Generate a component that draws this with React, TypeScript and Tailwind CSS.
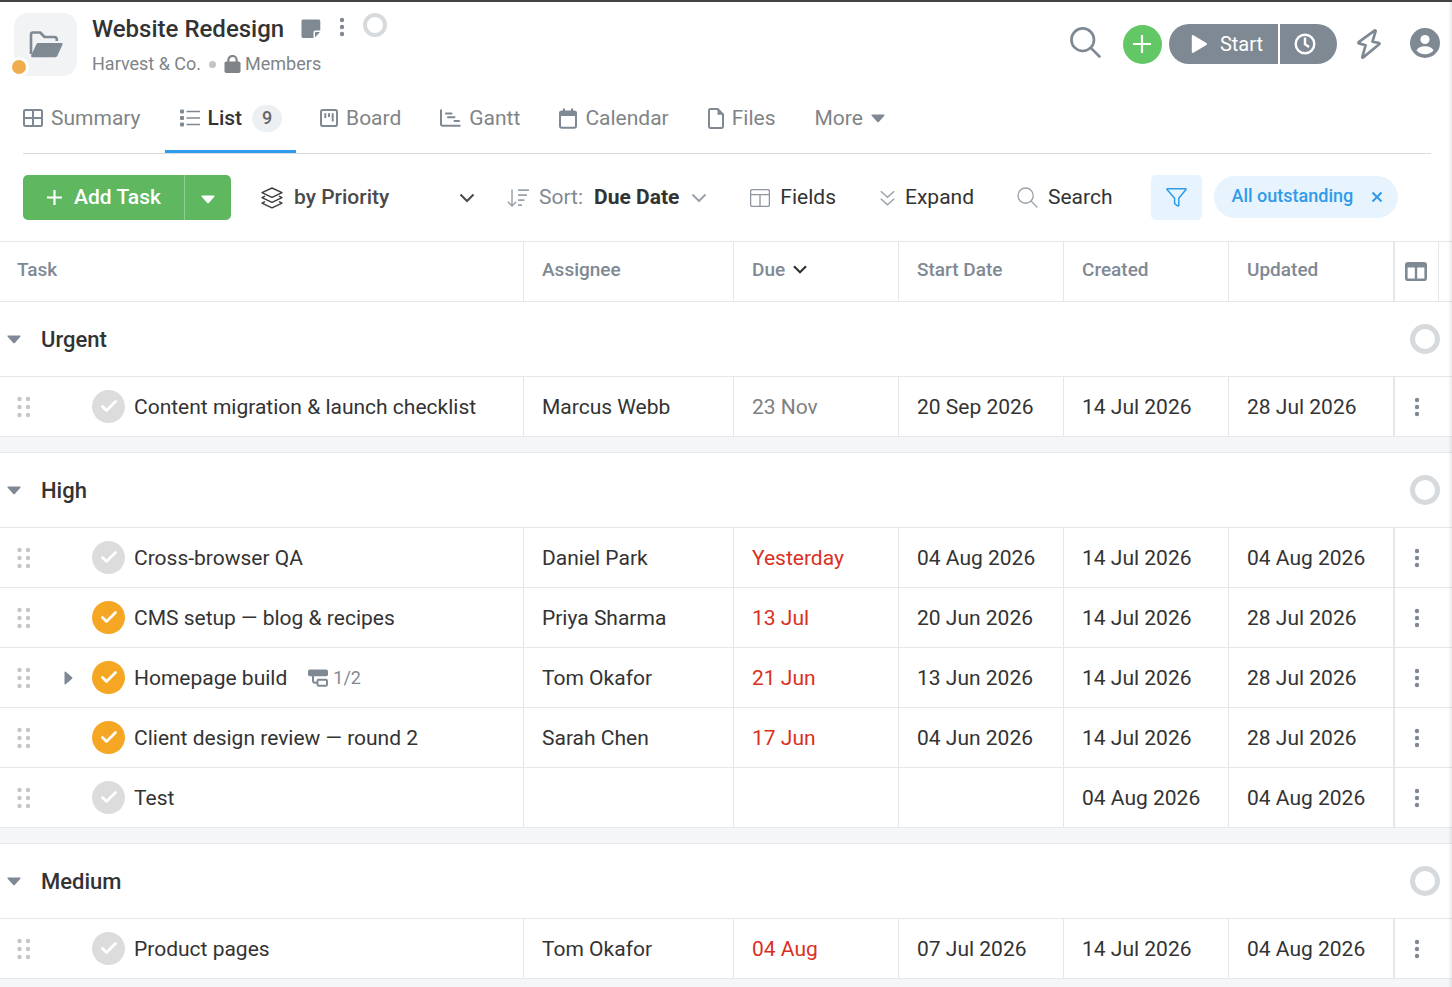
import { Fragment, type ReactNode } from "react";

type Task = {
  name: string;
  assignee?: string;
  due?: string;
  overdue?: boolean;
  start?: string;
  created: string;
  updated: string;
  started?: boolean;
  subtasks?: string;
};

type Group = { title: string; tasks: Task[] };

const groups: Group[] = [
  {
    title: "Urgent",
    tasks: [
      { name: "Content migration & launch checklist", assignee: "Marcus Webb", due: "23 Nov", start: "20 Sep 2026", created: "14 Jul 2026", updated: "28 Jul 2026" },
    ],
  },
  {
    title: "High",
    tasks: [
      { name: "Cross-browser QA", assignee: "Daniel Park", due: "Yesterday", overdue: true, start: "04 Aug 2026", created: "14 Jul 2026", updated: "04 Aug 2026" },
      { name: "CMS setup — blog & recipes", assignee: "Priya Sharma", due: "13 Jul", overdue: true, start: "20 Jun 2026", created: "14 Jul 2026", updated: "28 Jul 2026", started: true },
      { name: "Homepage build", assignee: "Tom Okafor", due: "21 Jun", overdue: true, start: "13 Jun 2026", created: "14 Jul 2026", updated: "28 Jul 2026", started: true, subtasks: "1/2" },
      { name: "Client design review — round 2", assignee: "Sarah Chen", due: "17 Jun", overdue: true, start: "04 Jun 2026", created: "14 Jul 2026", updated: "28 Jul 2026", started: true },
      { name: "Test", created: "04 Aug 2026", updated: "04 Aug 2026" },
    ],
  },
  {
    title: "Medium",
    tasks: [
      { name: "Product pages", assignee: "Tom Okafor", due: "04 Aug", overdue: true, start: "07 Jul 2026", created: "14 Jul 2026", updated: "04 Aug 2026" },
    ],
  },
];

/* Icons */

const CaretDown = ({ className = "text-[#7f8994]" }: { className?: string }) => (
  <svg width="14" height="9" viewBox="0 0 14 9" className={className} aria-hidden="true">
    <path d="M1.2.5h11.6c.8 0 1 .7.5 1.200L7.800 7.900c-.4.5-1.100.5-1.500 0L.700 1.700C.2 1.200.4.5 1.200.5z" fill="currentColor" />
  </svg>
);

const VerticalDots = () => (
  <svg width="6" height="20" viewBox="0 0 6 20" fill="#7f8994" aria-hidden="true">
    <circle cx="3" cy="3" r="2.200" />
    <circle cx="3" cy="10" r="2.200" />
    <circle cx="3" cy="17" r="2.200" />
  </svg>
);

const DragHandle = () => (
  <svg width="14" height="22" viewBox="0 0 14 22" fill="#c4c6c8" aria-hidden="true">
    {[3, 11, 19].map((y) => (
      <Fragment key={y}>
        <circle cx="2.500" cy={y} r="2.200" />
        <circle cx="11" cy={y} r="2.200" />
      </Fragment>
    ))}
  </svg>
);

const SubtaskIcon = () => (
  <svg width="20" height="18" viewBox="0 0 20 18" fill="none" aria-hidden="true">
    <rect x="0" y="0.500" width="20" height="6.800" rx="1.800" fill="#7f8994" />
    <path d="M5 6v5.500c0 1.400.8 2.200 2.200 2.200H9" stroke="#7f8994" strokeWidth="2" />
    <rect x="9.500" y="10.700" width="9.500" height="6" rx="1.300" stroke="#7f8994" strokeWidth="2" />
  </svg>
);

const SummaryIcon = () => (
  <svg width="20" height="18" viewBox="0 0 20 18" fill="none" stroke="#7f8994" strokeWidth="2" aria-hidden="true">
    <rect x="1" y="1" width="18" height="16" rx="1.200" />
    <path d="M10 1v16M1 9h18" />
  </svg>
);

const ListIcon = () => (
  <svg width="20" height="18" viewBox="0 0 20 18" aria-hidden="true">
    <g fill="#7f8994">
      <rect x="0" y="0.500" width="4" height="4" rx="1" />
      <rect x="0" y="7" width="4" height="4" rx="1" />
      <rect x="0" y="13.500" width="4" height="4" rx="1" />
    </g>
    <path d="M6.500 2.500H20M6.500 9H20M6.500 15.500H20" stroke="#7f8994" strokeWidth="1.700" />
  </svg>
);

const BoardIcon = () => (
  <svg width="18" height="18" viewBox="0 0 18 18" fill="none" stroke="#7f8994" aria-hidden="true">
    <rect x="1" y="1" width="16" height="16" rx="1.800" strokeWidth="2" />
    <path d="M5.300 4.300v4.700M9 4.300v3.700M12.700 4.300v8.200" strokeWidth="2" />
  </svg>
);

const GanttIcon = () => (
  <svg width="21" height="18" viewBox="0 0 21 18" fill="none" stroke="#7f8994" strokeWidth="2" aria-hidden="true">
    <path d="M1 .5V15c0 1 .6 1.700 1.700 1.700H20.500" />
    <path d="M6 4.500h5.500M8 8.200h6.500M14.500 11.900h4.500" strokeLinecap="round" />
  </svg>
);

const CalendarIcon = () => (
  <svg width="18" height="21" viewBox="0 0 18 21" fill="none" aria-hidden="true">
    <rect x="1" y="3.400" width="16" height="16.400" rx="1.800" stroke="#7f8994" strokeWidth="2" />
    <path d="M1 3.500h16v4.500H1z" fill="#7f8994" />
    <path d="M5 .5v4M13 .5v4" stroke="#7f8994" strokeWidth="2.200" />
  </svg>
);

const FileIcon = () => (
  <svg width="16" height="21" viewBox="0 0 16 21" fill="none" aria-hidden="true">
    <path d="M2.500 1h7.200L15 6.300v12c0 .9-.6 1.600-1.500 1.600h-11c-.9 0-1.500-.7-1.500-1.600V2.600C1 1.700 1.600 1 2.500 1z" stroke="#7f8994" strokeWidth="2" />
    <path d="M9.500.5v6.200h6z" fill="#7f8994" />
  </svg>
);

const LayersIcon = () => (
  <svg width="22" height="22" viewBox="0 0 22 22" fill="none" stroke="#3c3c3c" strokeWidth="1.400" strokeLinejoin="round" aria-hidden="true">
    <path d="M11 1l10 4.600-10 4.700L1 5.600z" />
    <path d="M4 9.200L1 10.700l10 4.700 10-4.700-3-1.500" />
    <path d="M4 14.600l-3 1.500 10 4.800 10-4.800-3-1.500" />
  </svg>
);

const Chevron = ({ className }: { className: string }) => (
  <svg width="16" height="10" viewBox="0 0 16 10" fill="none" stroke="currentColor" className={className} aria-hidden="true">
    <path d="M1.500 1.500L8 8l6.500-6.500" />
  </svg>
);

const SortIcon = () => (
  <svg width="22" height="18" viewBox="0 0 22 18" fill="none" stroke="#9ba2ab" strokeWidth="1.500" aria-hidden="true">
    <path d="M5 .5v16.500M.8 12.800L5 17l4.200-4.200" />
    <path d="M11 1.200h11M11 6.200h9M11 11.200h6.500M11 16.200h4" strokeWidth="1.700" />
  </svg>
);

const FieldsIcon = () => (
  <svg width="20" height="18" viewBox="0 0 20 18" fill="none" stroke="#8e959f" strokeWidth="1.300" aria-hidden="true">
    <rect x="0.600" y="0.600" width="18.800" height="16.800" rx="1.600" />
    <path d="M.6 5.600h18.800M10 5.600v11.800" />
  </svg>
);

const ExpandIcon = () => (
  <svg width="15" height="16" viewBox="0 0 15 16" fill="none" stroke="#9ba2ab" strokeWidth="1.500" aria-hidden="true">
    <path d="M.8 1.200l6.700 6 6.700-6M.8 8.700l6.700 6 6.700-6" />
  </svg>
);

const SearchIcon = ({ size, stroke, color }: { size: number; stroke: number; color: string }) => (
  <svg width={size} height={size} viewBox="0 0 30 30" fill="none" stroke={color} strokeWidth={stroke} strokeLinecap="round" aria-hidden="true">
    <circle cx="12.300" cy="12.300" r="10.900" />
    <path d="M20.400 20.400L28.500 28.500" />
  </svg>
);

const ColumnsIcon = () => (
  <svg width="22" height="19" viewBox="0 0 22 19" fill="none" aria-hidden="true">
    <rect x="1.300" y="1.300" width="19.400" height="16.400" rx="1.800" stroke="#7f8994" strokeWidth="2.600" />
    <path d="M1 1.500h20v4H1z" fill="#7f8994" />
    <path d="M11 5v13" stroke="#7f8994" strokeWidth="2.400" />
  </svg>
);

const Ring = ({ size, label }: { size: number; label: string }) => (
  <svg width={size} height={size} viewBox="0 0 30 30" fill="none" role="img" aria-label={label}>
    <circle cx="15" cy="15" r="12.500" stroke="#d6dadd" strokeWidth="5" />
  </svg>
);

/* Page parts */

const Header = () => (
  <header className="flex h-[84px] items-start justify-between pr-3 pl-[14px]">
    <div className="flex">
      <div className="relative mt-[11px] flex size-[63px] items-center justify-center rounded-[14px] bg-[#f1f3f5]">
        <svg width="34" height="27" viewBox="0 0 34 27" fill="none" aria-hidden="true">
          <path d="M2 23V3.500C2 2.300 2.700 1.500 3.900 1.500h7.300l4.300 4.500h9.600c1.700 0 2.700 1 2.700 2.600V10" stroke="#7f8994" strokeWidth="2.600" strokeLinejoin="round" />
          <path d="M9.500 12h23c1 0 1.400.7 1 1.600l-5 11c-.4 1-1.200 1.600-2.300 1.600H3.500c-1.300 0-1.800-.8-1.300-1.900L7.300 13.400c.4-.9 1.200-1.400 2.200-1.400z" fill="#7f8994" />
        </svg>
        <span className="absolute -bottom-px -left-[5px] size-5 rounded-full border-3 border-white bg-[#f0ad4e]" />
      </div>
      <div className="ml-[15px]">
        <div className="mt-[9px] flex items-center">
          <h1 className="text-2xl leading-9 font-medium text-[#333]">Website Redesign</h1>
          <button type="button" aria-label="Notes" className="ml-[17px]">
            <svg width="20" height="20" viewBox="0 0 20 20" aria-hidden="true">
              <path d="M2.200.5h15.400c1 0 1.700.7 1.700 1.700v9.300h-4.500c-1.500 0-2.300.8-2.300 2.300V19H2.200C1.200 19 .5 18.300.5 17.300V2.200C.5 1.200 1.200.5 2.200.5z" fill="#7f8994" />
              <path d="M14 18.500V14c0-.7.3-1 1-1h4z" fill="#7f8994" />
            </svg>
          </button>
          <button type="button" aria-label="Project menu" className="ml-[18px] pb-1">
            <VerticalDots />
          </button>
          <span className="ml-[18px] pb-2">
            <Ring size={24} label="Project progress" />
          </span>
        </div>
        <div className="mt-[3px] flex items-center text-lg leading-7 text-[#7f8487]">
          <a href="#client">Harvest &amp; Co.</a>
          <span className="mx-2 size-[7px] rounded-full bg-[#c2c4c6]" />
          <svg width="17" height="18" viewBox="0 0 17 18" fill="none" aria-hidden="true">
            <path d="M4.300 8V5.200a4.200 4.200 0 0 1 8.400 0V8" stroke="#7f8487" strokeWidth="2.200" />
            <rect x="0.500" y="6.500" width="16" height="11.500" rx="1.800" fill="#7f8487" />
          </svg>
          <a href="#members" className="ml-1">Members</a>
        </div>
      </div>
    </div>
    <div className="mt-[22px] flex h-10 items-center">
      <button type="button" aria-label="Search" className="mb-1">
        <SearchIcon size={31} stroke={2.6} color="#7f8994" />
      </button>
      <button type="button" aria-label="Add" className="ml-[22px] flex size-[39px] items-center justify-center rounded-full bg-[#63c766]">
        <svg width="18" height="18" viewBox="0 0 18 18" stroke="#fff" strokeWidth="2.200" aria-hidden="true">
          <path d="M9 0v18M0 9h18" />
        </svg>
      </button>
      <div className="ml-[7px] flex h-10 gap-[2px] text-white">
        <button type="button" className="flex items-center rounded-l-full bg-[#7f8994] pr-[15px] pl-[22px] text-xl">
          <svg width="17" height="18" viewBox="0 0 17 18" fill="#fff" aria-hidden="true">
            <path d="M.8 1.200C.8.300 1.600-.2 2.400.3l13 7.700c.8.500.8 1.500 0 2l-13 7.700c-.8.500-1.600 0-1.600-.9z" />
          </svg>
          <span className="ml-3">Start</span>
        </button>
        <button type="button" aria-label="Timer history" className="flex items-center rounded-r-full bg-[#7f8994] pr-[21px] pl-[14px]">
          <svg width="22" height="22" viewBox="0 0 22 22" fill="none" stroke="#fff" strokeWidth="2.400" aria-hidden="true">
            <circle cx="11" cy="11" r="9.300" />
            <path d="M11 4.500v6.700l4 2.800" />
          </svg>
        </button>
      </div>
      <button type="button" aria-label="Automations" className="ml-5">
        <svg width="24" height="30" viewBox="0 0 24 30" fill="none" stroke="#7f8994" strokeWidth="2.700" strokeLinejoin="round" aria-hidden="true">
          <path d="M17.500 1.600L1.700 13.200c-.5.4-.3 1 .3 1.200l6.600 1.900L5.300 27.900c-.2.700.4 1 .9.500L22.200 15.200c.5-.4.300-1-.3-1.200l-6.400-1.400L18.600 2.200c.2-.7-.5-1-1.100-.6z" />
        </svg>
      </button>
      <button type="button" aria-label="Account" className="mb-[2px] ml-[29px]">
        <svg width="30" height="30" viewBox="0 0 30 30" aria-hidden="true">
          <circle cx="15" cy="15" r="15" fill="#7f8994" />
          <circle cx="15" cy="11.500" r="4.600" fill="#fff" />
          <path d="M6.500 22.500c1.300-3 4.600-4.300 8.500-4.300s7.200 1.300 8.500 4.300c-2 2.400-5 3.800-8.500 3.800s-6.500-1.400-8.500-3.800z" fill="#fff" />
        </svg>
      </button>
    </div>
  </header>
);

const Tab = ({ icon, label, first }: { icon?: ReactNode; label: ReactNode; first?: boolean }) => (
  <a
    href="#tab"
    className={`flex items-center gap-2 border-b-3 border-transparent pr-[15px] text-[#7f8487] ${first ? "pl-0" : "pl-[15px]"}`}
  >
    {icon}
    {label}
  </a>
);

const Tabs = () => (
  <nav className="mr-[21px] ml-[23px] flex h-[68px] gap-[9px] border-b border-[#d9dbde] text-[21px] leading-8">
    <Tab first icon={<SummaryIcon />} label="Summary" />
    <a href="#list" aria-current="page" className="flex items-center gap-2 border-b-3 border-[#2f9bea] pr-[14px] pl-[15px] font-medium text-[#333]">
      <ListIcon />
      List
      <span className="ml-[2px] flex h-[27px] w-[30px] items-center justify-center rounded-full bg-[#edf0f2] text-lg text-[#666]">9</span>
    </a>
    <Tab icon={<BoardIcon />} label="Board" />
    <Tab icon={<GanttIcon />} label="Gantt" />
    <Tab icon={<CalendarIcon />} label="Calendar" />
    <Tab icon={<FileIcon />} label="Files" />
    <Tab
      label={
        <>
          More
          <CaretDown />
        </>
      }
    />
  </nav>
);

const Toolbar = () => (
  <div className="flex h-[87px] items-center pl-[23px] text-[21px] text-[#333]">
    <div className="flex h-[45px] shrink-0 overflow-hidden rounded-[5px] bg-[#5fb760] text-white">
      <button type="button" className="flex w-[161px] items-center justify-center gap-3 pl-px font-medium">
        <svg width="15" height="15" viewBox="0 0 15 15" stroke="#fff" strokeWidth="2.200" aria-hidden="true">
          <path d="M7.500 0v15M0 7.500h15" />
        </svg>
        Add Task
      </button>
      <button type="button" aria-label="More ways to add" className="flex w-[47px] items-center justify-center border-l border-[#8fcd90] pt-1">
        <CaretDown className="text-white" />
      </button>
    </div>
    <div className="relative ml-[30px] flex items-center">
      <LayersIcon />
      <select aria-label="Group by" className="h-[45px] w-[192px] appearance-none bg-transparent pl-[11px] font-medium text-[#4a4a4a]">
        <option>by Priority</option>
      </select>
      <Chevron className="pointer-events-none absolute right-0 text-[#4a4a4a] stroke-2" />
    </div>
    <button type="button" className="ml-8 flex items-center">
      <SortIcon />
      <span className="ml-[10px] text-[#7f8994]">Sort:</span>
      <strong className="ml-[11px] font-bold">Due Date</strong>
      <Chevron className="ml-3 text-[#9ba2ab] stroke-2" />
    </button>
    <button type="button" className="ml-[43px] flex items-center gap-[10px]">
      <FieldsIcon />
      Fields
    </button>
    <button type="button" className="ml-11 flex items-center gap-[10px]">
      <ExpandIcon />
      Expand
    </button>
    <button type="button" className="ml-[43px] flex items-center gap-[10px]">
      <SearchIcon size={21} stroke={1.9} color="#9ba2ab" />
      Search
    </button>
    <button type="button" aria-label="Filter" className="ml-[38px] flex h-[45px] w-[51px] items-center justify-center rounded-[5px] bg-[#e7f3fd]">
      <svg width="21" height="19" viewBox="0 0 21 19" fill="none" stroke="#2f9bea" strokeWidth="1.500" strokeLinejoin="round" aria-hidden="true">
        <path d="M1.300.8h18.400c.3 0 .5.400.3.700l-7.200 8.700v7.100c0 .6-.6.900-1.100.6l-2.600-1.700c-.3-.2-.5-.5-.5-.9v-5.100L1 1.500C.8 1.200 1 .8 1.300.8z" />
      </svg>
    </button>
    <div className="mb-[2px] ml-3 flex h-[42px] items-center rounded-full bg-[#e7f3fd] pr-[15px] pl-[18px] text-lg font-medium text-[#2f9bea]">
      <span className="pb-[2px]">All outstanding</span>
      <button type="button" aria-label="Remove filter" className="ml-[18px]">
        <svg width="12" height="12" viewBox="0 0 12 12" stroke="currentColor" strokeWidth="2" aria-hidden="true">
          <path d="M1.500 1.500l9 9M10.500 1.500l-9 9" />
        </svg>
      </button>
    </div>
  </div>
);

const HeadCell = ({ children }: { children: ReactNode }) => (
  <th scope="col" className="border-y border-r border-[#e5e7eb] pb-1 pl-[18px] text-left font-medium">
    {children}
  </th>
);

const Cell = ({ children, className = "" }: { children?: ReactNode; className?: string }) => (
  <td className={`border-r border-b border-[#e5e7eb] pl-[18px] ${className}`}>{children}</td>
);

const TaskRow = ({ task }: { task: Task }) => (
  <tr className="h-[60px]">
    <td className="border-r border-b border-[#e5e7eb]">
      <div className="flex items-center pl-[17px]">
        <DragHandle />
        <span className="ml-[33px] flex w-7 shrink-0">
          {task.subtasks && (
            <button type="button" aria-label="Show subtasks">
              <svg width="9" height="14" viewBox="0 0 9 14" fill="#7f8994" aria-hidden="true">
                <path d="M.5 1.200c0-.8.700-1 1.200-.5l6.400 5.500c.5.500.5 1.100 0 1.600l-6.400 5.500c-.5.500-1.200.3-1.200-.5z" />
              </svg>
            </button>
          )}
        </span>
        <span className="grid size-[33px] shrink-0 place-items-center">
          <input
            type="checkbox"
            aria-label={`Complete ${task.name}`}
            defaultChecked={task.started}
            className="col-start-1 row-start-1 size-[33px] appearance-none rounded-full bg-[#dcdcdc] checked:bg-[#f5a623]"
          />
          <svg width="16" height="14" viewBox="0 0 16 14" fill="none" stroke="#fff" strokeWidth="2.700" strokeLinecap="round" strokeLinejoin="round" className="pointer-events-none col-start-1 row-start-1 mb-[2px]" aria-hidden="true">
            <path d="M1.500 7.500L5.500 11.500L14.500 2.500" />
          </svg>
        </span>
        <span className="ml-[9px]">{task.name}</span>
        {task.subtasks && (
          <span className="ml-[21px] flex items-center gap-[5px] text-lg text-[#7f8994]">
            <SubtaskIcon />
            {task.subtasks}
          </span>
        )}
      </div>
    </td>
    <Cell>{task.assignee}</Cell>
    <Cell className={task.overdue ? "text-[#d9301f]" : "text-[#808080]"}>{task.due}</Cell>
    <Cell>{task.start}</Cell>
    <Cell>{task.created}</Cell>
    <Cell>{task.updated}</Cell>
    <td className="border-b border-l border-[#e5e7eb] pl-[19px]">
      <button type="button" aria-label={`Options for ${task.name}`} className="flex">
        <VerticalDots />
      </button>
    </td>
  </tr>
);

const TaskTable = () => (
  <table className="w-full table-fixed border-separate border-spacing-0 text-[21px] leading-8 text-[#333]">
    <colgroup>
      <col />
      <col className="w-[210px]" />
      <col className="w-[165px]" />
      <col className="w-[165px]" />
      <col className="w-[165px]" />
      <col className="w-[165px]" />
      <col className="w-[58px]" />
    </colgroup>
    <thead>
      <tr className="h-[61px] text-[19px] text-[#7f8994]">
        <th scope="col" className="border-y border-r border-[#e5e7eb] pb-1 pl-[17px] text-left font-medium">Task</th>
        <HeadCell>Assignee</HeadCell>
        <HeadCell>
          <button type="button" className="flex items-center gap-2">
            Due
            <svg width="14" height="9" viewBox="0 0 14 9" fill="none" stroke="#333" strokeWidth="2.200" aria-hidden="true">
              <path d="M1 1.200l6 6 6-6" />
            </svg>
          </button>
        </HeadCell>
        <HeadCell>Start Date</HeadCell>
        <HeadCell>Created</HeadCell>
        <HeadCell>Updated</HeadCell>
        <th scope="col" className="border-y border-l border-[#e5e7eb]">
          <button type="button" aria-label="Choose columns" className="flex h-[59px] w-11 items-center border-r border-[#e5e7eb] pl-[10px]">
            <ColumnsIcon />
          </button>
        </th>
      </tr>
    </thead>
    {groups.map((group, i) => (
      <tbody key={group.title}>
        {i > 0 && (
          <tr className="h-4">
            <td colSpan={7} className="border-b border-[#e5e7eb] bg-[#f5f6f8]" />
          </tr>
        )}
        <tr className="h-[75px]">
          <th scope="rowgroup" colSpan={7} className="border-b border-[#e5e7eb] pr-3 pl-[7px]">
            <div className="flex items-center">
              <button type="button" className="flex items-center gap-5 text-[22px] leading-[33px] font-medium">
                <CaretDown />
                {group.title}
              </button>
              <span className="ml-auto">
                <Ring size={30} label={`${group.title} progress`} />
              </span>
            </div>
          </th>
        </tr>
        {group.tasks.map((task) => (
          <TaskRow key={task.name} task={task} />
        ))}
      </tbody>
    ))}
  </table>
);

export default function App() {
  return (
    <div className="relative flex min-h-screen flex-col border-t-2 border-[#454243] bg-white font-[Roboto,sans-serif]">
      <Header />
      <Tabs />
      <Toolbar />
      <TaskTable />
      <div className="flex-1 bg-[#f5f6f8]" />
      {/* Soft edge of the panel docked on the right */}
      <div className="pointer-events-none absolute inset-y-0 right-0 w-1 bg-linear-to-l from-black/8 to-transparent" />
    </div>
  );
}
